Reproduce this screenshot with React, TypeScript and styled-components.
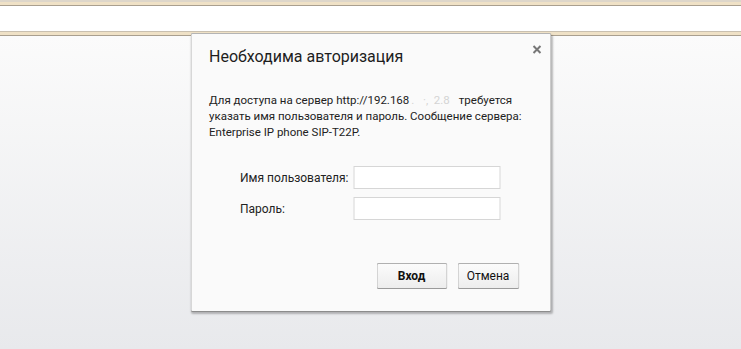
import React from "react";
import styled, { createGlobalStyle } from "styled-components";

const GlobalStyle = createGlobalStyle`
  html, body, #root {
    margin: 0;
    padding: 0;
    height: 100%;
  }
  body {
    font-family: Roboto, "Noto Sans", sans-serif;
    overflow: hidden;
  }
`;

const App = () => {
  return (
    <Page>
      <GlobalStyle />
      <Strip $top />
      <AddressArea />
      <Strip />
      <Content />
      <Dialog>
        <Header>
          <Title>Необходима авторизация</Title>
          <CloseButton aria-label="close">
            <svg width="9" height="9" viewBox="0 0 9 9">
              <path d="M1 1 L8 8 M8 1 L1 8" stroke="#777" strokeWidth="2" />
            </svg>
          </CloseButton>
        </Header>
        <Message>
          Для доступа на сервер http://192.168<Redacted>.&nbsp;&nbsp;&nbsp;·,&nbsp;&nbsp;2.8</Redacted>
          требуется указать имя пользователя и пароль. Сообщение сервера:
          Enterprise IP phone SIP-T22P.
        </Message>
        <Form>
          <Label>Имя пользователя:</Label>
          <Input type="text" />
          <Label>Пароль:</Label>
          <Input type="password" />
        </Form>
        <Actions>
          <Button $primary>Вход</Button>
          <Button>Отмена</Button>
        </Actions>
      </Dialog>
    </Page>
  );
};

const Page = styled.div`
  position: relative;
  height: 349px;
  display: flex;
  flex-direction: column;
  background: #fff;
`;

const Strip = styled.div<{ $top?: boolean }>`
  height: 3px;
  background: #efe1c6;
  border-top: ${(p) => (p.$top ? "2px solid #ddd6ca" : "1px solid #c9c0b0")};
  border-bottom: 1px solid #a99f8f;
  ${(p) => (p.$top ? "" : "box-shadow: 0 1px 0 #d6d6d6;")}
`;

const AddressArea = styled.div`
  height: 25px;
  background: #ffffff;
`;

const Content = styled.div`
  flex: 1;
  background: linear-gradient(#fbfbfb, #e8e9ec);
`;

const Dialog = styled.div`
  position: absolute;
  top: 33px;
  left: 50%;
  transform: translateX(-50%);
  width: 359px;
  height: 277px;
  box-sizing: content-box;
  background: #fafafa;
  border: 1px solid #b4b4b4;
  border-bottom-color: #8c8c8c;
  border-right-color: #9c9c9c;
  border-radius: 2px;
  box-shadow: 1px 2px 2px rgba(0, 0, 0, 0.25);
  display: flex;
  flex-direction: column;
`;

const Header = styled.div`
  display: flex;
  justify-content: space-between;
  align-items: flex-start;
  padding: 13px 10px 0 18px;
`;

const Title = styled.h1`
  margin: 0;
  font-size: 16px;
  font-weight: 400;
  line-height: 20px;
  color: #1e1e1e;
`;

const CloseButton = styled.button`
  border: none;
  background: none;
  padding: 0;
  margin-top: -2px;
  margin-right: -1px;
  width: 9px;
  height: 9px;
  display: flex;
  cursor: pointer;
`;

const Message = styled.p`
  margin: 25px 18px 0 18px;
  font-size: 11.5px;
  line-height: 16px;
  color: #222;
`;

const Redacted = styled.span`
  padding: 0 9px 0 2px;
  color: #d4d4d4;
  white-space: nowrap;
`;

const Form = styled.div`
  display: grid;
  grid-template-columns: 105px 147px;
  column-gap: 8px;
  row-gap: 8px;
  align-items: center;
  margin: 26px 0 0 49px;
`;

const Label = styled.label`
  font-size: 12px;
  color: #222;
  white-space: nowrap;
`;

const Input = styled.input`
  box-sizing: border-box;
  width: 147px;
  height: 23px;
  margin: 0;
  border: 1px solid #d6d6d6;
  background: #fff;
  outline: none;
`;

const Actions = styled.div`
  display: flex;
  justify-content: flex-end;
  gap: 10px;
  margin-top: auto;
  padding: 0 31px 22px 0;
`;

const Button = styled.button<{ $primary?: boolean }>`
  box-sizing: border-box;
  height: 26px;
  width: ${(p) => (p.$primary ? "71px" : "62px")};
  padding: 0;
  font-family: Roboto, "Noto Sans", sans-serif;
  font-size: 12px;
  font-weight: ${(p) => (p.$primary ? 700 : 400)};
  color: #111;
  background: linear-gradient(#fbfbfb, #ededed);
  border: 1px solid #b0b0b0;
  border-bottom-color: #9a9a9a;
  border-radius: 2px;
  cursor: pointer;
`;

export default App;
